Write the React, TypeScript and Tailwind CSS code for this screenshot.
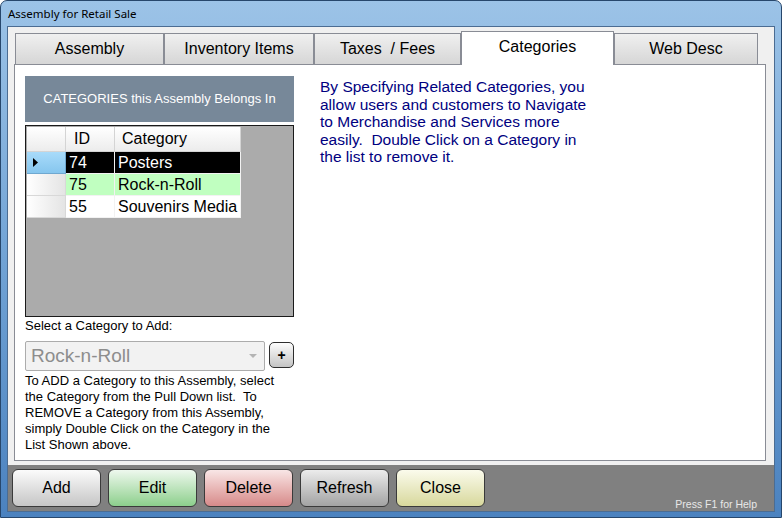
import React from 'react'

const FONT = { fontFamily: '"Liberation Sans", Arial, sans-serif' }

const tabs = [
  { label: 'Assembly', w: 'w-[149px]' },
  { label: 'Inventory Items', w: 'w-[150px]' },
  { label: 'Taxes  / Fees', w: 'w-[147px]' },
  { label: 'Categories', w: 'w-[153px]', active: true },
  { label: 'Web Desc', w: 'w-[144px]' },
]

const rows = [
  { id: '74', name: 'Posters', cls: 'bg-black text-white', current: true },
  { id: '75', name: 'Rock-n-Roll', cls: 'bg-[#c0ffc0] text-black' },
  { id: '55', name: 'Souvenirs Media', cls: 'bg-white text-black' },
]

const buttons = [
  { label: 'Add', cls: 'from-[#fbfbfb] to-[#c6c6c6]' },
  { label: 'Edit', cls: 'from-[#eef8ee] to-[#8ccf8c]' },
  { label: 'Delete', cls: 'from-[#f8e6e6] to-[#d68a8a]' },
  { label: 'Refresh', cls: 'from-[#ececec] to-[#a3a3a3]' },
  { label: 'Close', cls: 'from-[#fbfbec] to-[#d8d89c]' },
]

function CategoryGrid() {
  return (
    <div className="mt-[3px] h-[192px] border border-[#1a1a1a] bg-[#ababab] p-[1px]">
      <div className="grid grid-cols-[39px_49px_126px] text-[16px] leading-none">
        {/* header row */}
        <div className="h-[25px] border-r border-b border-[#d4d4d4] bg-gradient-to-b from-white to-[#ececec]" />
        <div className="h-[25px] border-r border-b border-[#d4d4d4] bg-gradient-to-b from-white to-[#ececec] pl-[8px] flex items-center">
          ID
        </div>
        <div className="h-[25px] border-r border-b border-[#d4d4d4] bg-gradient-to-b from-white to-[#ececec] pl-[7px] flex items-center">
          Category
        </div>
        {rows.map((r) => (
          <React.Fragment key={r.id}>
            <div
              className={`h-[22px] border-r border-b flex items-center pl-[6px] ${
                r.current
                  ? 'border-[#6fa8d0] bg-gradient-to-b from-[#a8dbfa] to-[#86c6ee]'
                  : 'border-[#d8d8d8] bg-gradient-to-r from-white to-[#e4e4e4]'
              }`}
            >
              {r.current && (
                <svg width="5" height="9" viewBox="0 0 5 9">
                  <path d="M0 0 L5 4.5 L0 9 Z" fill="#000" />
                </svg>
              )}
            </div>
            <div className={`h-[22px] border-r border-b border-[#f2f2f2] pl-[3px] flex items-center ${r.cls}`}>
              {r.id}
            </div>
            <div className={`h-[22px] border-r border-b border-[#f2f2f2] pl-[3px] flex items-center ${r.cls}`}>
              {r.name}
            </div>
          </React.Fragment>
        ))}
      </div>
    </div>
  )
}

export default function App() {
  return (
    <div
      className="w-[782px] h-[518px] flex flex-col rounded-t-[7px] border border-[#27476c] bg-gradient-to-b from-[#9cc3e7] via-[#71a3d5] to-[#4b82bf]"
      style={FONT}
    >
      {/* title bar */}
      <div className="h-[25px] flex items-center pl-[7px]">
        <span
          className="text-[11.5px] text-black"
          style={{ fontFamily: '"Noto Sans", "Open Sans", sans-serif' }}
        >
          Assembly for Retail Sale
        </span>
      </div>

      {/* client area */}
      <div className="mx-[6px] mb-[5px] flex-1 flex flex-col border border-[#4b6c92] bg-[#f0f0f0]">
        <div className="h-[438px] pt-[4px] pl-[6px] pr-[8px] pb-[4px] flex flex-col">
          {/* tab strip */}
          <div className="h-[33px] ml-[1px] flex items-end">
            {tabs.map((t) =>
              t.active ? (
                <div
                  key={t.label}
                  className={`${t.w} relative z-10 h-[34px] -mb-[1px] bg-white border border-b-0 border-[#898c95] flex justify-center pt-[3px] text-[16px] text-black`}
                >
                  {t.label}
                </div>
              ) : (
                <div
                  key={t.label}
                  className={`${t.w} h-[31px] bg-gradient-to-b from-[#f0f0f0] to-[#d6d6d6] border border-b-0 border-[#898c95] flex items-center justify-center pb-[1px] text-[16px] text-black whitespace-pre`}
                >
                  {t.label}
                </div>
              ),
            )}
          </div>

          {/* tab panel */}
          <div className="h-[397px] border border-[#898c95] bg-white pl-[10px] pt-[11px] flex">
            <div className="w-[269px] flex flex-col">
              <div className="h-[46px] bg-[#778899] flex items-center justify-center text-[13px] text-white">
                CATEGORIES this Assembly Belongs In
              </div>

              <CategoryGrid />

              <div className="mt-[2px] text-[13px] leading-[14px] text-black">
                Select a Category to Add:
              </div>

              <div className="mt-[8px] flex items-start">
                <div className="w-[241px] h-[30px] rounded-[2px] border border-[#acacac] bg-[#f2f2f2] flex items-center pl-[5px] pr-[4px]">
                  <span className="flex-1 text-[19px] text-[#8d8d8d]">Rock-n-Roll</span>
                  <svg width="8" height="5" viewBox="0 0 8 5" className="mr-[3px]">
                    <path d="M0 0 L8 0 L4 4 Z" fill="#b4b4b4" />
                  </svg>
                </div>
                <div className="ml-[4px] mt-[1px] w-[25px] h-[26px] rounded-[5px] border border-[#2e2e2e] bg-gradient-to-b from-[#fdfdfd] to-[#c4c4c4] flex items-center justify-center text-[14px] font-bold leading-none text-black">
                  +
                </div>
              </div>

              <p className="mt-[2px] text-[13px] leading-[16px] text-black whitespace-nowrap">
                To ADD a Category to this Assembly, select
                <br />
                the Category from the Pull Down list.&nbsp; To
                <br />
                REMOVE a Category from this Assembly,
                <br />
                simply Double Click on the Category in the
                <br />
                List Shown above.
              </p>
            </div>

            <p className="ml-[26px] mt-[2px] text-[15.5px] leading-[17.5px] text-[#000080] whitespace-nowrap">
              By Specifying Related Categories, you
              <br />
              allow users and customers to Navigate
              <br />
              to Merchandise and Services more
              <br />
              easily.&nbsp; Double Click on a Category in
              <br />
              the list to remove it.
            </p>
          </div>
        </div>

        {/* bottom button bar */}
        <div className="flex-1 bg-[#808080] pt-[4px] pl-[4px] pr-[17px] flex items-start">
          <div className="flex gap-[7px]">
            {buttons.map((b) => (
              <button
                key={b.label}
                className={`w-[89px] h-[38px] rounded-[6px] border border-[#3a3a3a] bg-gradient-to-b ${b.cls} text-[16px] text-black`}
              >
                {b.label}
              </button>
            ))}
          </div>
          <span className="ml-auto mt-[30px] text-[10.5px] leading-none text-[#e8e8e8]">
            Press F1 for Help
          </span>
        </div>
      </div>
    </div>
  )
}
